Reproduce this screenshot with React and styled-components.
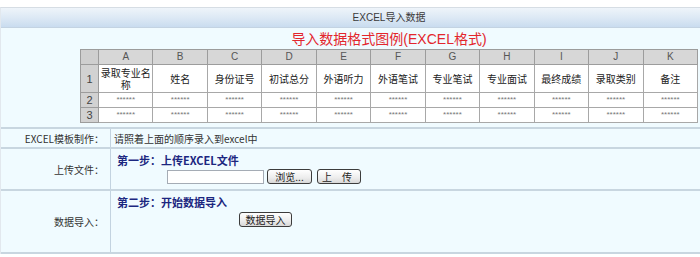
import styled, { createGlobalStyle } from "styled-components"

const GlobalStyle = createGlobalStyle`
  html, body {
    margin: 0;
    padding: 0;
    background: #ffffff;
    overflow: hidden;
  }
  body {
    font-family: "Liberation Sans", Arial, "Noto Sans CJK SC", sans-serif;
    font-size: 10px;
    color: #333;
  }
`

const Page = styled.div`
  padding-top: 7px;
`

const Panel = styled.div`
  width: 776px;
  border-top: 1px solid #d6dde4;
  border-left: 1px solid #e2e8ee;
  background: #f0fbff;
`

const HeaderBar = styled.div`
  height: 19px;
  line-height: 19px;
  text-align: center;
  font-size: 10px;
  color: #3a3a3a;
  background: linear-gradient(#eef4fa, #dde9f5 50%, #c9dcef);
  border-bottom: 1px solid #c3d3e2;
`

const Sample = styled.div`
  padding: 3px 0 4px;
  border-bottom: 2px solid #c8d6e0;
`

const SampleTitle = styled.div`
  text-align: center;
  font-size: 14px;
  line-height: 17px;
  color: #e3262d;
  font-family: "Liberation Sans", Arial, "Noto Sans CJK SC", sans-serif;
`

const Sheet = styled.table`
  margin: 1px auto 0;
  width: 618px;
  table-layout: fixed;
  border-collapse: collapse;
  border: 1px solid #6e6e6e;
  background: #fff;
  font-family: "Noto Sans CJK SC", sans-serif;
`

const HeadCell = styled.td`
  height: 14px;
  padding: 0;
  background: ${(p) => (p.$corner ? "#cfcfcf" : "#d7d7d7")};
  border: 1px solid #9c9c9c;
  color: #555;
  font-family: "Liberation Sans", Arial, sans-serif;
  font-size: 10px;
  text-align: center;
  line-height: 14px;
`

const RowNum = styled.td`
  padding: 0;
  background: #d2d2d2;
  border: 1px solid #9c9c9c;
  color: #444;
  font-family: "Liberation Sans", Arial, sans-serif;
  font-size: 11px;
  text-align: center;
`

const Cell = styled.td`
  height: ${(p) => p.$h}px;
  padding: 0;
  border: 1px solid #a8a8a8;
  text-align: center;
  font-family: ${(p) =>
    p.$stars ? `"Liberation Sans", Arial, sans-serif` : `"Noto Sans CJK SC", sans-serif`};
  font-size: ${(p) => (p.$stars ? "8px" : "10px")};
  line-height: ${(p) => (p.$stars ? "10px" : "12px")};
  color: ${(p) => (p.$stars ? "#777" : "#222")};
  word-break: break-all;
`

const Form = styled.table`
  width: 100%;
  border-collapse: collapse;
  font-family: "Noto Sans CJK SC", sans-serif;
`

const Label = styled.td`
  width: 103px;
  height: ${(p) => p.$h}px;
  padding: 0 6px 0 0;
  text-align: right;
  font-size: 10px;
  color: #333;
  border-right: 1px solid #c3d3e0;
  border-bottom: 2px solid #c8d6e0;
`

const Value = styled.td`
  padding: 0 0 0 3px;
  vertical-align: ${(p) => (p.$top ? "top" : "middle")};
  font-size: 10px;
  color: #333;
  border-bottom: 2px solid #c8d6e0;
`

const Step = styled.div`
  margin: 4px 0 0 3px;
  font-size: 11px;
  line-height: 14px;
  font-weight: bold;
  color: #1c2780;
`

const Controls = styled.div`
  display: flex;
  align-items: center;
  gap: 3px;
  margin: ${(p) => p.$m};
`

const FileInput = styled.div`
  width: 95px;
  height: 12px;
  background: #fff;
  border: 1px solid #a5acb5;
`

const Button = styled.button`
  height: 15px;
  width: ${(p) => p.$w}px;
  padding: 0;
  margin-left: ${(p) => p.$ml || 0}px;
  border: 1px solid #3c3c3c;
  border-radius: 3px;
  background: linear-gradient(#ffffff, #ececec 60%, #d8d8d8);
  font-family: "Noto Sans CJK SC", sans-serif;
  font-size: 10px;
  line-height: 13px;
  color: #222;
  letter-spacing: ${(p) => (p.$spaced ? "4px" : "0")};
`

const columns = ["A", "B", "C", "D", "E", "F", "G", "H", "I", "J", "K"]
const fields = [
  "录取专业名称",
  "姓名",
  "身份证号",
  "初试总分",
  "外语听力",
  "外语笔试",
  "专业笔试",
  "专业面试",
  "最终成绩",
  "录取类别",
  "备注",
]

export default function App() {
  return (
    <>
      <GlobalStyle />
      <Page>
        <Panel>
          <HeaderBar>EXCEL导入数据</HeaderBar>

          <Sample>
            <SampleTitle>导入数据格式图例(EXCEL格式)</SampleTitle>
            <Sheet>
              <colgroup>
                <col style={{ width: 18 }} />
                {columns.map((c) => (
                  <col key={c} />
                ))}
              </colgroup>
              <tbody>
                <tr>
                  <HeadCell $corner />
                  {columns.map((c) => (
                    <HeadCell key={c}>{c}</HeadCell>
                  ))}
                </tr>
                <tr>
                  <RowNum>1</RowNum>
                  {fields.map((f) => (
                    <Cell key={f} $h={27}>
                      {f}
                    </Cell>
                  ))}
                </tr>
                {[2, 3].map((n) => (
                  <tr key={n}>
                    <RowNum>{n}</RowNum>
                    {columns.map((c) => (
                      <Cell key={c} $h={14} $stars>
                        ******
                      </Cell>
                    ))}
                  </tr>
                ))}
              </tbody>
            </Sheet>
          </Sample>

          <Form>
            <tbody>
              <tr>
                <Label $h={18}>EXCEL模板制作：</Label>
                <Value>请照着上面的顺序录入到excel中</Value>
              </tr>
              <tr>
                <Label $h={40}>上传文件：</Label>
                <Value $top>
                  <Step>第一步：上传EXCEL文件</Step>
                  <Controls $m="2px 0 0 53px">
                    <FileInput />
                    <Button $w={45}>浏览...</Button>
                    <Button $w={44} $ml={2} $spaced>
                      上 传
                    </Button>
                  </Controls>
                </Value>
              </tr>
              <tr>
                <Label $h={61}>数据导入：</Label>
                <Value $top>
                  <Step>第二步：开始数据导入</Step>
                  <Controls $m="3px 0 0 125px">
                    <Button $w={53}>数据导入</Button>
                  </Controls>
                </Value>
              </tr>
            </tbody>
          </Form>
        </Panel>
      </Page>
    </>
  )
}
